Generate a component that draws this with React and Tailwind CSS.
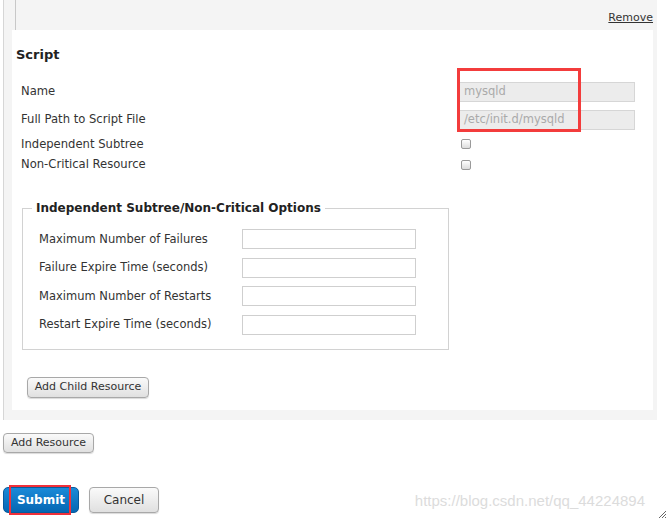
import React from 'react';

const font = { fontFamily: '"DejaVu Sans", Verdana, sans-serif' };

function Row({ label, children, className = '' }) {
  return (
    <div className={`flex items-center ${className}`}>
      <span className="w-[446px] pl-[9px] text-[11.6px] text-[#333]">{label}</span>
      {children}
    </div>
  );
}

function Checkbox() {
  return <span className="ml-[3px] inline-block h-[10px] w-[10px] rounded-[2px] border border-[#9a9a9a] bg-gradient-to-b from-white to-[#dcdcdc]" />;
}

function OptionRow({ label }) {
  return (
    <div className="flex items-center">
      <span className="w-[219px] pl-[16px] text-[11.5px] text-[#333]">{label}</span>
      <span className="block h-[20px] w-[174px] border border-[#cfcfcf] bg-white" />
    </div>
  );
}

function GrayButton({ children, className = '' }) {
  return (
    <button className={`rounded-[4px] border border-[#a8a8a8] bg-gradient-to-b from-[#fafafa] to-[#e0e0e0] text-[11px] text-[#333] shadow-[0_1px_1px_rgba(0,0,0,0.15)] ${className}`}>
      {children}
    </button>
  );
}

export default function App() {
  return (
    <div className="relative h-[521px] w-[669px] overflow-hidden bg-white" style={font}>
      <div className="ml-[3px] w-[654px] border-l border-[#d6d6d6] bg-[#f4f4f4] pb-[10px] pl-[8px] pr-[4px]">
        <div className="flex h-[30px] items-end justify-between">
          <span className="ml-[3px] block h-[30px] w-px bg-[#c8c8c8]" />
          <span className="mb-[4px] text-[11px] text-[#333] underline">Remove</span>
        </div>
        <div className="bg-white pb-[12px] pt-[15px]">
          <div className="pl-[4px] text-[13px] font-bold text-[#222]">Script</div>
          <div className="relative mt-[17px]">
            <Row label="Name">
              <span className="flex h-[20px] w-[177px] items-center border border-[#d6d6d6] bg-[#ececec] px-[5px] text-[11.5px] text-[#aaa]">mysqld</span>
            </Row>
            <Row label="Full Path to Script File" className="mt-[8px]">
              <span className="flex h-[20px] w-[177px] items-center border border-[#d6d6d6] bg-[#ececec] px-[5px] text-[11.5px] text-[#aaa]">/etc/init.d/mysqld</span>
            </Row>
            <Row label="Independent Subtree" className="mt-[6px]">
              <Checkbox />
            </Row>
            <Row label="Non-Critical Resource" className="mt-[3px]">
              <Checkbox />
            </Row>
            <div className="absolute left-[445px] top-[-14px] h-[64px] w-[124px] border-[3px] border-[#f33c3c]" />
          </div>

          <fieldset className="ml-[10px] mt-[26px] w-[427px] border border-[#d2d2d2] px-0 pb-[14px] pt-[12px]">
            <legend className="ml-[9px] px-[4px] text-[12px] font-bold text-[#222]">Independent Subtree/Non-Critical Options</legend>
            <div className="flex flex-col gap-[8.5px]">
              <OptionRow label="Maximum Number of Failures" />
              <OptionRow label="Failure Expire Time (seconds)" />
              <OptionRow label="Maximum Number of Restarts" />
              <OptionRow label="Restart Expire Time (seconds)" />
            </div>
          </fieldset>

          <GrayButton className="ml-[15px] mt-[27px] h-[21px] w-[122px]">Add Child Resource</GrayButton>
        </div>
      </div>

      <GrayButton className="ml-[3px] mt-[13px] h-[20px] w-[91px]">Add Resource</GrayButton>

      <div className="ml-[3px] mt-[34px] flex items-center gap-[10px]">
        <button className="relative h-[26px] w-[76px] rounded-[5px] border border-[#0a5a9c] bg-gradient-to-b from-[#1a8ad8] to-[#0567b3] text-[12px] font-bold text-white">
          Submit
          <span className="absolute left-[5px] top-[-3px] h-[30px] w-[62px] border-[2px] border-[#f0303a]" />
        </button>
        <GrayButton className="h-[26px] w-[70px] text-[12px]">Cancel</GrayButton>
      </div>

      <div className="absolute bottom-[9px] right-[24px] text-[15px] text-[#dcdcdc]" style={{ fontFamily: '"Liberation Sans", Arial, sans-serif' }}>
        https://blog.csdn.net/qq_44224894
      </div>
      <svg className="absolute bottom-[2px] right-[2px]" width="10" height="10" viewBox="0 0 10 10">
        <path d="M9 2 L2 9 M9 5 L5 9 M9 8 L8 9" stroke="#666" strokeWidth="1" />
      </svg>
    </div>
  );
}
